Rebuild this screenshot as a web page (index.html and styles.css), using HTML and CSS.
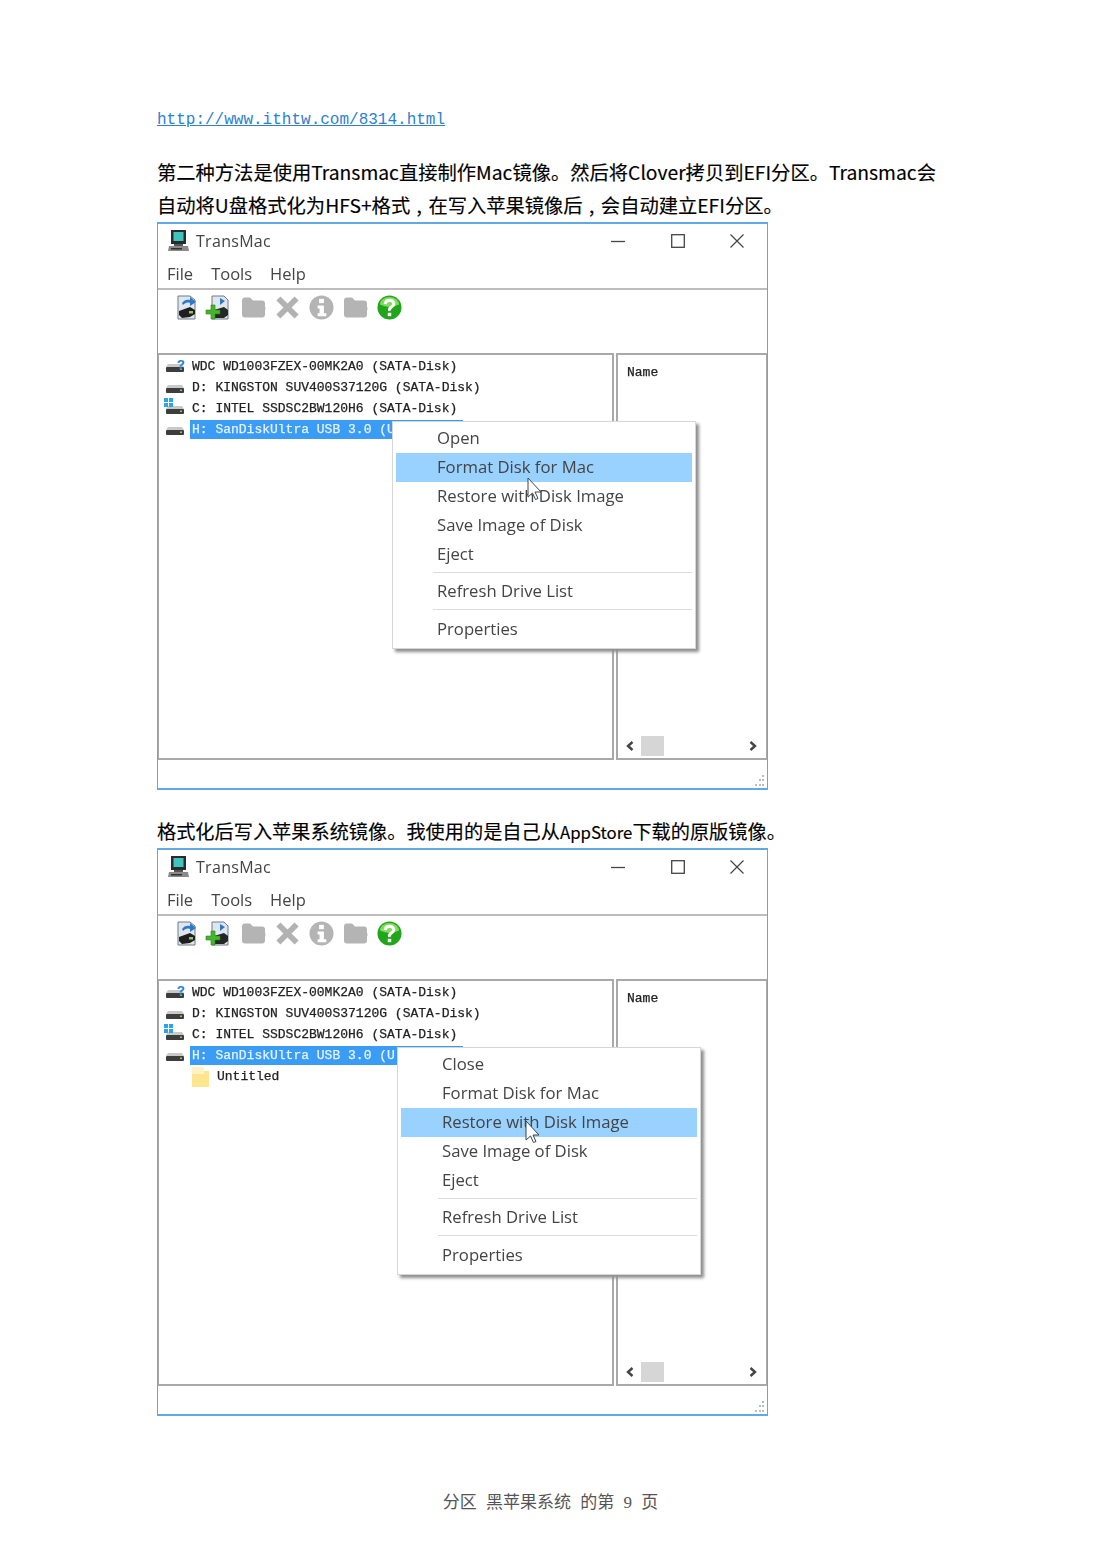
FILE: index.html
```html
<!DOCTYPE html>
<html lang="zh-CN">
<head>
  <meta charset="UTF-8">
  <meta name="viewport" content="width=device-width, initial-scale=1.0">
  <title>分区 黑苹果系统</title>
  <link rel="stylesheet" href="styles.css">
</head>
<body>

  <svg class="icon-defs" width="0" height="0">
    <symbol id="i-computer" viewBox="0 0 22 22">
      <rect x="3" y="0" width="15" height="14" fill="#2b2b2b"/>
      <rect x="5.500" y="2" width="10" height="9" fill="#3fc4c0"/>
      <rect x="6" y="14" width="9" height="2" fill="#555"/>
      <path d="M1 16h19l1 5H0z" fill="#8a8a8a"/>
      <rect x="3" y="18" width="11" height="1.500" fill="#333"/>
    </symbol>
    <symbol id="i-drive" viewBox="0 0 18 10">
      <path d="M2 1h14l2 3H0z" fill="#c9c9c9"/>
      <rect x="0" y="4" width="18" height="5" rx="1" fill="#3d3d3d"/>
      <rect x="14" y="5.500" width="2" height="1.500" fill="#8fc46a"/>
    </symbol>
    <symbol id="i-win" viewBox="0 0 9 9">
      <rect x="0" y="0" width="4" height="4" fill="#2aa6e8"/>
      <rect x="5" y="0" width="4" height="4" fill="#2aa6e8"/>
      <rect x="0" y="5" width="4" height="4" fill="#2aa6e8"/>
      <rect x="5" y="5" width="4" height="4" fill="#2aa6e8"/>
    </symbol>
    <symbol id="i-image" viewBox="0 0 25 25">
      <path d="M4 1h12l5 4v19H4z" fill="#dfe6ee" stroke="#6f7a85" stroke-width="1"/>
      <path d="M8 8c2-3 5-4 8-3V2l6 5-6 4V8c-3-1-5 0-7 2z" fill="#2f79c4"/>
      <path d="M5 16l11-4 5 3v4l-5 3-8 1-3-3z" fill="#1f1f1f"/>
      <rect x="15" y="16" width="4" height="2.500" fill="#8fc46a"/>
    </symbol>
    <symbol id="i-add" viewBox="0 0 25 25">
      <path d="M7 1h12l4 4v19H7z" fill="#dfe6ee" stroke="#6f7a85" stroke-width="1"/>
      <path d="M15 3l5 3-5 4z" fill="#2f79c4"/>
      <path d="M9 15l10-3 4 3v5l-4 3h-9z" fill="#262626"/>
      <path d="M6 10h4v5h5v4h-5v5H6v-5H1v-4h5z" fill="#45b52e" stroke="#2c7f1c" stroke-width=".6"/>
    </symbol>
    <symbol id="i-folder" viewBox="0 0 25 22">
      <path d="M1 4q0-3 3-3h5l3 3h9q3 0 3 3v3q1 2 0 4v4q0 3-3 3H4q-3 0-3-3z" fill="#b4b4b4"/>
    </symbol>
    <symbol id="i-cross" viewBox="0 0 22 22">
      <path d="M3 3l16 16M19 3L3 19" stroke="#b2b2b2" stroke-width="5"/>
    </symbol>
    <symbol id="i-info" viewBox="0 0 26 26">
      <circle cx="13" cy="13" r="12.500" fill="#b4b4b4"/>
      <rect x="10.500" y="4" width="5" height="4.500" fill="#fff"/>
      <path d="M9 11h6.500v8H18v3H9v-3h2v-5H9z" fill="#fff"/>
    </symbol>
    <symbol id="i-help" viewBox="0 0 26 26">
      <circle cx="13" cy="13" r="12.500" fill="#21a51b"/>
      <path d="M3 10a10 8 0 0 1 20 0q-10 5-20 0z" fill="#7fdc5e"/>
      <path d="M8.500 9.500q.5-4 4.500-4t4.500 3.500q0 2-2.500 3.500t-2 4" fill="none" stroke="#fff" stroke-width="3.200"/>
      <rect x="11.200" y="18.500" width="3.600" height="3.500" fill="#fff"/>
    </symbol>
    <symbol id="i-min" viewBox="0 0 14 14"><path d="M0 7.500h14" stroke="#444" stroke-width="1.300"/></symbol>
    <symbol id="i-max" viewBox="0 0 14 14"><rect x=".7" y=".7" width="12.600" height="12.600" fill="none" stroke="#444" stroke-width="1.300"/></symbol>
    <symbol id="i-close" viewBox="0 0 14 14"><path d="M.5.500l13 13M13.500.500l-13 13" stroke="#444" stroke-width="1.200"/></symbol>
    <symbol id="i-cursor" viewBox="0 0 16 24">
      <path d="M1 1v19l4.500-4 3 6.500 2.500-1-3-6.500h6z" fill="#fff" stroke="#3c4650" stroke-width="1"/>
    </symbol>
    <symbol id="i-left" viewBox="0 0 8 10"><path d="M6.500 1L2 5l4.500 4" fill="none" stroke="#444" stroke-width="2.400"/></symbol>
    <symbol id="i-right" viewBox="0 0 8 10"><path d="M1.500 1L6 5 1.500 9" fill="none" stroke="#444" stroke-width="2.400"/></symbol>
    <symbol id="i-grip" viewBox="0 0 12 12">
      <g fill="#b5bcc2">
        <rect x="9" y="0" width="2" height="2"/>
        <rect x="6" y="4" width="2" height="2"/><rect x="9" y="4" width="2" height="2"/>
        <rect x="2" y="9" width="2" height="2"/><rect x="6" y="9" width="2" height="2"/><rect x="9" y="9" width="2" height="2"/>
      </g>
    </symbol>
    <symbol id="i-yfolder" viewBox="0 0 17 20">
      <path d="M0 0h11l1 4h5v16H0z" fill="#fde68f"/>
      <path d="M0 0h11l1 4v3H0z" fill="#fff3c4"/>
    </symbol>
  </svg>

  <main class="page">
    <p class="doc-link"><a href="#">http://www.ithtw.com/8314.html</a></p>

    <p class="doc-text">第二种方法是使用Transmac直接制作Mac镜像。然后将Clover拷贝到EFI分区。Transmac会自动将U盘格式化为HFS+格式&#8196;,&#8196;在写入苹果镜像后&#8196;,&#8196;会自动建立EFI分区。</p>

    <section class="window">
      <div class="titlebar">
        <svg class="title-icon"><use href="#i-computer"/></svg>
        <span class="title-text">TransMac</span>
        <div class="win-buttons">
          <svg><use href="#i-min"/></svg>
          <svg><use href="#i-max"/></svg>
          <svg><use href="#i-close"/></svg>
        </div>
      </div>
      <div class="menubar"><span>File</span><span>Tools</span><span>Help</span></div>
      <div class="toolbar">
        <svg class="tool"><use href="#i-image"/></svg>
        <svg class="tool"><use href="#i-add"/></svg>
        <svg class="tool"><use href="#i-folder"/></svg>
        <svg class="tool"><use href="#i-cross"/></svg>
        <svg class="tool"><use href="#i-info"/></svg>
        <svg class="tool"><use href="#i-folder"/></svg>
        <svg class="tool"><use href="#i-help"/></svg>
      </div>
      <div class="panes">
        <div class="pane-tree">
          <div class="tree-row"><span class="drive"><svg class="drive-img"><use href="#i-drive"/></svg><b class="drive-q">?</b></span><span class="tree-label">WDC WD1003FZEX-00MK2A0 (SATA-Disk)</span></div>
          <div class="tree-row"><span class="drive"><svg class="drive-img"><use href="#i-drive"/></svg></span><span class="tree-label">D: KINGSTON SUV400S37120G (SATA-Disk)</span></div>
          <div class="tree-row"><span class="drive"><svg class="drive-img"><use href="#i-drive"/></svg><svg class="drive-win"><use href="#i-win"/></svg></span><span class="tree-label">C: INTEL SSDSC2BW120H6 (SATA-Disk)</span></div>
          <div class="tree-row"><span class="drive"><svg class="drive-img"><use href="#i-drive"/></svg></span><span class="tree-label selected">H: SanDiskUltra USB 3.0 (U</span></div>
        </div>
        <div class="pane-list">
          <div class="list-head">Name</div>
          <div class="hscroll">
            <svg class="arrow"><use href="#i-left"/></svg>
            <span class="thumb"></span>
            <svg class="arrow arrow-end"><use href="#i-right"/></svg>
          </div>
        </div>
      </div>
      <div class="statusbar"><svg class="grip"><use href="#i-grip"/></svg></div>

      <ul class="context-menu menu-one">
        <li>Open</li>
        <li class="active">Format Disk for Mac</li>
        <li>Restore with Disk Image</li>
        <li>Save Image of Disk</li>
        <li>Eject</li>
        <li class="sep"></li>
        <li>Refresh Drive List</li>
        <li class="sep sep-last"></li>
        <li>Properties</li>
      </ul>
      <svg class="cursor cursor-one"><use href="#i-cursor"/></svg>
    </section>

    <p class="doc-text doc-text-second">格式化后写入苹果系统镜像。我使用的是自己从<span class="latin-small">AppStore</span>下载的原版镜像。</p>

    <section class="window">
      <div class="titlebar">
        <svg class="title-icon"><use href="#i-computer"/></svg>
        <span class="title-text">TransMac</span>
        <div class="win-buttons">
          <svg><use href="#i-min"/></svg>
          <svg><use href="#i-max"/></svg>
          <svg><use href="#i-close"/></svg>
        </div>
      </div>
      <div class="menubar"><span>File</span><span>Tools</span><span>Help</span></div>
      <div class="toolbar">
        <svg class="tool"><use href="#i-image"/></svg>
        <svg class="tool"><use href="#i-add"/></svg>
        <svg class="tool"><use href="#i-folder"/></svg>
        <svg class="tool"><use href="#i-cross"/></svg>
        <svg class="tool"><use href="#i-info"/></svg>
        <svg class="tool"><use href="#i-folder"/></svg>
        <svg class="tool"><use href="#i-help"/></svg>
      </div>
      <div class="panes">
        <div class="pane-tree">
          <div class="tree-row"><span class="drive"><svg class="drive-img"><use href="#i-drive"/></svg><b class="drive-q">?</b></span><span class="tree-label">WDC WD1003FZEX-00MK2A0 (SATA-Disk)</span></div>
          <div class="tree-row"><span class="drive"><svg class="drive-img"><use href="#i-drive"/></svg></span><span class="tree-label">D: KINGSTON SUV400S37120G (SATA-Disk)</span></div>
          <div class="tree-row"><span class="drive"><svg class="drive-img"><use href="#i-drive"/></svg><svg class="drive-win"><use href="#i-win"/></svg></span><span class="tree-label">C: INTEL SSDSC2BW120H6 (SATA-Disk)</span></div>
          <div class="tree-row"><span class="drive"><svg class="drive-img"><use href="#i-drive"/></svg></span><span class="tree-label selected">H: SanDiskUltra USB 3.0 (U</span></div>
          <div class="tree-row tree-child"><svg class="child-folder"><use href="#i-yfolder"/></svg><span class="tree-label">Untitled</span></div>
        </div>
        <div class="pane-list">
          <div class="list-head">Name</div>
          <div class="hscroll">
            <svg class="arrow"><use href="#i-left"/></svg>
            <span class="thumb"></span>
            <svg class="arrow arrow-end"><use href="#i-right"/></svg>
          </div>
        </div>
      </div>
      <div class="statusbar"><svg class="grip"><use href="#i-grip"/></svg></div>

      <ul class="context-menu menu-two">
        <li>Close</li>
        <li>Format Disk for Mac</li>
        <li class="active">Restore with Disk Image</li>
        <li>Save Image of Disk</li>
        <li>Eject</li>
        <li class="sep"></li>
        <li>Refresh Drive List</li>
        <li class="sep sep-last"></li>
        <li>Properties</li>
      </ul>
      <svg class="cursor cursor-two"><use href="#i-cursor"/></svg>
    </section>
  </main>

  <footer class="page-footer">分区 黑苹果系统 的第 9 页</footer>

</body>
</html>
```

FILE: styles.css
```css
body {
  margin: 0;
  height: 1558px;
  overflow: hidden;
  background-color: #fff;
  font-family: "Noto Sans CJK SC", sans-serif;
  color: #000;
}

.icon-defs {
  position: absolute;
}

.page {
  padding: 103px 0 0 157px;
}

.doc-link {
  margin: 0;
  height: 34px;
  line-height: 34px;
  font-family: "Liberation Mono", "Noto Sans CJK SC", monospace;
  font-size: 16px;
}

.doc-link a {
  color: #2f7fd0;
}

.doc-text {
  margin: 19px 0 0;
  width: 790px;
  font-size: 19.300px;
  line-height: 33px;
  -webkit-text-stroke: 0.15px #000;
}

.doc-text-second {
  margin-top: 25px;
  font-size: 19.200px;
  line-height: 32px;
}

.latin-small {
  font-size: 16.800px;
}

/* TransMac window */
.window {
  position: relative;
  box-sizing: border-box;
  width: 611px;
  height: 568px;
  display: flex;
  flex-direction: column;
  border: 1px solid #5fa9e4;
  border-top-width: 2px;
  border-bottom-width: 2px;
  background-color: #fff;
  font-family: "Open Sans", sans-serif;
  color: #444;
  filter: blur(0.35px);
}

.titlebar {
  height: 34px;
  display: flex;
  align-items: center;
  padding-left: 10px;
}

.title-icon {
  width: 22px;
  height: 22px;
}

.title-text {
  margin-left: 6px;
  font-size: 16px;
  letter-spacing: 0.3px;
}

.win-buttons {
  margin-left: auto;
  display: flex;
  gap: 45.500px;
  padding-right: 23px;
}

.win-buttons svg {
  width: 14px;
  height: 14px;
}

.menubar {
  height: 30px;
  display: flex;
  align-items: center;
  gap: 18px;
  padding-left: 9px;
  border-bottom: 2px solid #bdbdbd;
  font-size: 16.500px;
}

.toolbar {
  height: 63px;
  display: flex;
  align-items: flex-start;
  gap: 9px;
  padding: 5px 0 0 16px;
  box-sizing: border-box;
}

.tool {
  width: 25px;
  height: 25px;
}

.tool:nth-child(2) {
  margin-left: -3px;
}

.tool:nth-child(3) {
  margin-left: 2px;
}

.panes {
  flex: 1;
  display: flex;
  gap: 2px;
}

.pane-tree {
  box-sizing: border-box;
  width: 456px;
  padding: 1px 0 0 7px;
  border: 2px solid #a9a9a9;
  border-left-width: 1px;
  font-family: "Liberation Mono", monospace;
  font-size: 13px;
  color: #222;
  -webkit-text-stroke: 0.25px;
}

.tree-row {
  height: 21px;
  display: flex;
  align-items: center;
  white-space: nowrap;
}

.drive {
  position: relative;
  width: 24px;
  height: 21px;
  flex: none;
}

.drive-img {
  position: absolute;
  left: 0;
  top: 7px;
  width: 18px;
  height: 10px;
}

.drive-win {
  position: absolute;
  left: -2px;
  top: 0;
  width: 9px;
  height: 9px;
}

.drive-q {
  position: absolute;
  left: 11px;
  top: 1px;
  font-family: "Liberation Sans", sans-serif;
  font-size: 13px;
  color: #2b83d6;
}

.tree-label {
  padding: 0 0 0 2px;
  line-height: 19px;
}

.selected {
  padding-right: 68px;
  background-color: #3a9cf5;
  color: #e6f3ff;
}

.tree-child {
  padding-left: 26px;
}

.child-folder {
  width: 17px;
  height: 20px;
  margin-right: 6px;
}

.pane-list {
  flex: 1;
  display: flex;
  flex-direction: column;
  border: 2px solid #a9a9a9;
  border-right-width: 1px;
  font-family: "Liberation Mono", monospace;
  font-size: 13px;
  color: #222;
  -webkit-text-stroke: 0.25px;
}

.list-head {
  padding: 10px 0 0 9px;
}

.hscroll {
  margin-top: auto;
  height: 20px;
  margin-bottom: 2px;
  display: flex;
  align-items: center;
  padding: 0 9px 0 8px;
}

.arrow {
  width: 8px;
  height: 10px;
}

.arrow-end {
  margin-left: auto;
}

.thumb {
  width: 23px;
  height: 20px;
  margin-left: 7px;
  background-color: #d6d6d6;
}

.statusbar {
  height: 27px;
  display: flex;
  justify-content: flex-end;
  align-items: flex-end;
  padding: 0 2px 1px 0;
}

.grip {
  width: 12px;
  height: 12px;
}

/* right click menu, lies over the panes */
.context-menu {
  position: absolute;
  box-sizing: border-box;
  width: 304px;
  height: 228px;
  margin: 0;
  padding: 2px 3px;
  list-style: none;
  background-color: #fff;
  border: 1px solid #d6d6d6;
  box-shadow: 3px 3px 3px #8e8e8e;
  font-size: 16.700px;
  color: #444;
}

.menu-one {
  left: 234px;
  top: 197px;
}

.menu-two {
  left: 239px;
  top: 197px;
}

.context-menu li {
  height: 29px;
  line-height: 27px;
  padding-left: 41px;
}

.context-menu .active {
  background-color: #99d1ff;
}

.context-menu .sep {
  height: 1px;
  margin: 3px 0 4px 37px;
  padding: 0;
  background-color: #dcdcdc;
}

.context-menu .sep-last {
  margin-bottom: 5px;
}

.cursor {
  position: absolute;
  width: 16px;
  height: 24px;
}

.cursor-one {
  left: 369px;
  top: 253px;
}

.cursor-two {
  left: 367px;
  top: 270px;
}

.page-footer {
  margin-top: 75px;
  text-align: center;
  line-height: 24px;
  font-family: "Liberation Serif", "Noto Sans CJK SC", serif;
  font-size: 17px;
  color: #555;
  word-spacing: 5px;
}
```
